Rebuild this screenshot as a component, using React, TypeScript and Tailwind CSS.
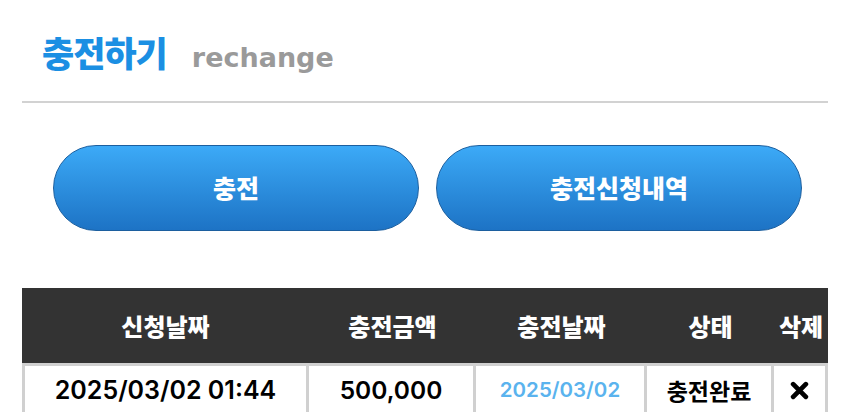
import React from "react";

const cell = "flex items-center justify-center border-t-[3px] border-r-[3px] border-[#d0d0d0]";

export default function App() {
  return (
    <div className="w-[850px] h-[412px] overflow-hidden bg-white font-['Noto_Sans_CJK_KR',sans-serif]">
      <div className="px-[22px]">
        <div className="flex items-baseline pl-[20px] pt-[30px] h-[101px] gap-[25px]">
          <span className="text-[35px] leading-[44px] font-black text-[#1b8fe3] tracking-[-1px]">
            충전하기
          </span>
          <span className="text-[27px] leading-[44px] font-bold text-[#9a9a9a] font-['DejaVu_Sans',sans-serif]">
            rechange
          </span>
        </div>
        <div className="h-[2px] bg-[#d2d2d2]" />
        <div className="flex gap-[17px] pl-[31px] pt-[42px]">
          <button className="w-[366px] h-[86px] rounded-full border border-[#1c5f9f] bg-gradient-to-b from-[#3caaf7] to-[#1d73c5] text-white text-[25px] font-black">
            충전
          </button>
          <button className="w-[366px] h-[86px] rounded-full border border-[#1c5f9f] bg-gradient-to-b from-[#3caaf7] to-[#1d73c5] text-white text-[25px] font-black">
            충전신청내역
          </button>
        </div>
        <div className="mt-[57px]">
          <div className="grid grid-cols-[287px_167px_171px_127px_54px] h-[75px] bg-[#333333] text-white text-[24px] font-black items-center text-center">
            <div>신청날짜</div>
            <div>충전금액</div>
            <div>충전날짜</div>
            <div>상태</div>
            <div>삭제</div>
          </div>
          <div className="grid grid-cols-[287px_167px_171px_127px_54px] h-[52px] text-center">
            <div className={`${cell} border-l-[3px] text-[25px] font-semibold text-black font-['Inter',sans-serif]`}>
              2025/03/02 01:44
            </div>
            <div className={`${cell} text-[24.5px] font-semibold text-black font-['Inter',sans-serif]`}>
              500,000
            </div>
            <div className={`${cell} text-[20.5px] font-semibold text-[#5ab3ee] font-['Inter',sans-serif]`}>
              2025/03/02
            </div>
            <div className={`${cell} text-[23px] font-bold text-black`}>
              충전완료
            </div>
            <div className={cell}>
              <svg width="19" height="19" viewBox="0 0 18 18">
                <path d="M3 3 L15 15 M15 3 L3 15" stroke="#000" strokeWidth="4.5" strokeLinecap="round" />
              </svg>
            </div>
          </div>
        </div>
      </div>
    </div>
  );
}
